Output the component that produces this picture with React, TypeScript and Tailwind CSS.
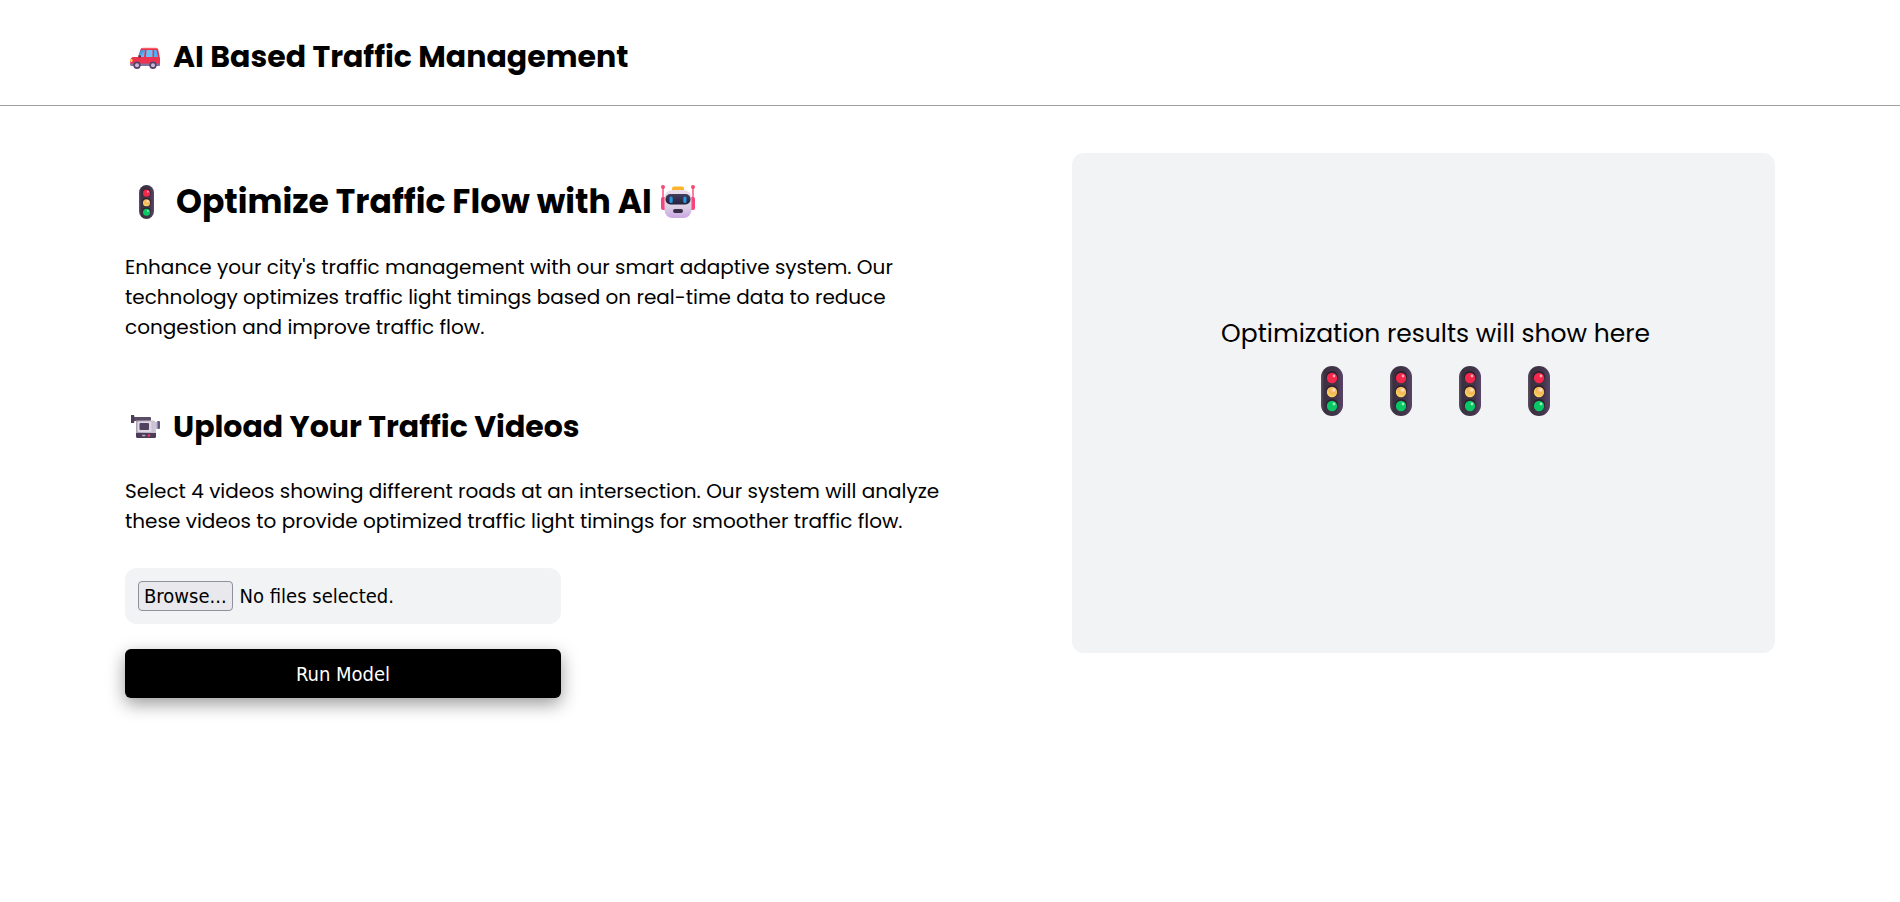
import React, { useRef, useState } from 'react';

function CarIcon() {
  return (
    <svg viewBox="0 0 32 32" className="w-8 h-8 shrink-0" aria-hidden="true">
      <defs>
        <linearGradient id="carGlass" x1="0" y1="0" x2="1" y2="1">
          <stop offset="0" stopColor="#1f7fd6" />
          <stop offset="1" stopColor="#7ccbfb" />
        </linearGradient>
      </defs>
      <path d="M13.500 7h13.700c1 0 1.700.6 2 1.500L30.500 15v9H6l3-8 2.600-7.700c.3-.8 1-1.300 1.900-1.300Z" fill="#e8304f" />
      <path d="M14 6.800h13c.8 0 1.400.3 1.800 1H12.200c.4-.7 1-1 1.800-1Z" fill="#ff6f6f" />
      <path d="M12.500 9h3.500l-1 7H9.300l2-5.800c.2-.7.6-1.200 1.200-1.200Z" fill="url(#carGlass)" />
      <path d="M18 9h5.500v7H17l.5-6.500Z" fill="#6cc0f7" />
      <path d="M25 9h2.500l1.500 7h-4Z" fill="#4fb0f0" />
      <path d="M4.500 16H30c.6 0 1 .5 1 1v6c0 1-.5 1.500-1.500 1.500H3c-1.200 0-1.800-.7-1.800-1.800V20c0-2.300 1.300-4 3.300-4Z" fill="#ee3350" />
      <path d="M1.200 22.500H31v1.300c0 .8-.5 1.200-1.300 1.200H2.500c-.9 0-1.300-.4-1.300-1.200Z" fill="#84749c" />
      <rect x="1.300" y="18" width="2.200" height="3" rx="1" fill="#ffe145" />
      <rect x="9.500" y="14.300" width="2.500" height="2.200" rx=".8" fill="#54334f" />
      <circle cx="8" cy="24.200" r="3.700" fill="#5a4068" />
      <circle cx="8" cy="24.200" r="2" fill="#c8b8d8" />
      <circle cx="24" cy="24.200" r="3.700" fill="#5a4068" />
      <circle cx="24" cy="24.200" r="2" fill="#c8b8d8" />
    </svg>
  );
}

function TrafficLight({ className }: { className: string }) {
  return (
    <svg viewBox="0 0 22 50" className={className} aria-hidden="true">
      <defs>
        <linearGradient id="lightBody" x1="0" y1="0" x2="1" y2="0">
          <stop offset="0" stopColor="#5b5162" />
          <stop offset="0.15" stopColor="#3b303f" />
          <stop offset="0.7" stopColor="#42354a" />
          <stop offset="1" stopColor="#594468" />
        </linearGradient>
        <radialGradient id="lightAmber" cx="0.6" cy="0.3" r="0.8">
          <stop offset="0" stopColor="#ffd3a0" />
          <stop offset="0.4" stopColor="#f3b552" />
          <stop offset="1" stopColor="#ffe070" />
        </radialGradient>
      </defs>
      <rect x="0" y="0" width="22" height="50" rx="11" fill="url(#lightBody)" />
      <circle cx="11" cy="11" r="6" fill="#2c2030" />
      <circle cx="11" cy="25" r="6" fill="#2c2030" />
      <circle cx="11" cy="39" r="6" fill="#2c2030" />
      <circle cx="11" cy="12" r="5.200" fill="#f3284b" />
      <circle cx="11" cy="26" r="5.200" fill="url(#lightAmber)" />
      <circle cx="11" cy="40" r="5.200" fill="#09c765" />
      <circle cx="13" cy="10" r="1.400" fill="#ffa5b5" />
      <circle cx="13" cy="24" r="1.400" fill="#ffe4c8" />
      <circle cx="13" cy="38" r="1.400" fill="#9af0bd" />
    </svg>
  );
}

function RobotIcon() {
  return (
    <svg viewBox="0 0 36 36" className="w-9 h-9 shrink-0" aria-hidden="true">
      <defs>
        <linearGradient id="robotHead" x1="0" y1="0" x2="0" y2="1">
          <stop offset="0" stopColor="#e9dfec" />
          <stop offset="0.6" stopColor="#dccfe4" />
          <stop offset="1" stopColor="#c9a6e2" />
        </linearGradient>
        <linearGradient id="robotFace" x1="0" y1="0" x2="0" y2="1">
          <stop offset="0" stopColor="#433d5c" />
          <stop offset="1" stopColor="#22203c" />
        </linearGradient>
      </defs>
      <path d="M3 3v12M33 3v12" stroke="#ff5c86" strokeWidth="1.600" />
      <circle cx="3" cy="3" r="2" fill="#f24a73" />
      <circle cx="33" cy="3" r="2" fill="#f24a73" />
      <rect x="1" y="13" width="6" height="13" rx="2" fill="#f6457b" />
      <rect x="29" y="13" width="6" height="13" rx="2" fill="#f6457b" />
      <rect x="12" y="2.500" width="12" height="6" rx="2" fill="#fcb42c" />
      <rect x="4.500" y="6" width="27" height="28" rx="8" fill="url(#robotHead)" />
      <rect x="5.500" y="10" width="25" height="10.500" rx="5" fill="url(#robotFace)" />
      <rect x="9.500" y="12.500" width="3.200" height="6.500" rx="1.500" fill="#2497de" />
      <rect x="23.300" y="12.500" width="3.200" height="6.500" rx="1.500" fill="#2497de" />
      <rect x="13" y="25" width="10" height="4" rx="2" fill="#3a2d48" />
    </svg>
  );
}

function CameraIcon() {
  return (
    <svg viewBox="0 0 32 32" className="w-8 h-8 shrink-0" aria-hidden="true">
      <defs>
        <linearGradient id="camBody" x1="0" y1="0" x2="1" y2="0">
          <stop offset="0" stopColor="#a99fb3" />
          <stop offset="1" stopColor="#cfc8d6" />
        </linearGradient>
      </defs>
      <rect x="4" y="7" width="18" height="4" rx="1" fill="#5b4c66" />
      <path d="M2 5h2.500c.5 0 .8.400.8.800v6.400c0 .5-.3.800-.8.800H2Z" fill="#4b3d58" />
      <rect x="28" y="11" width="3" height="8" rx="1" fill="#66577c" />
      <rect x="25" y="12" width="3.500" height="7" fill="#bdb5c9" />
      <path d="M7 10.500h17.500c1.500 0 2.500 1 2.500 2.500v10H7Z" fill="url(#camBody)" />
      <rect x="8.500" y="11.500" width="14" height="10.500" rx="1" fill="#ded8e4" />
      <rect x="10.500" y="13" width="9.500" height="7" rx="1" fill="#51415f" />
      <path d="M7 23h20v3.500c0 .8-.5 1.500-1.500 1.500h-17C7.500 28 7 27.300 7 26.500Z" fill="#4c3c5a" />
      <rect x="13" y="24.800" width="3.500" height="1.400" rx=".6" fill="#b7abc4" />
      <circle cx="20" cy="25.500" r="1.200" fill="#f03a5f" />
    </svg>
  );
}

function App() {
  const fileRef = useRef<HTMLInputElement>(null);
  const [count, setCount] = useState(0);

  return (
    <div className="bg-white text-black font-['Poppins','Inter',sans-serif]">
      <header className="border-b border-[#a0a0a0] px-[125px] pt-9 pb-7">
        <h1 className="flex items-center gap-3 pl-1 h-[41px] text-[30px] font-bold whitespace-nowrap">
          <CarIcon />
          AI Based Traffic Management
        </h1>
      </header>

      <main className="grid grid-cols-[27fr_23fr] items-start gap-[122px] px-[125px] pt-[47px] pb-16">
        <div className="pt-[25px]">
          <section>
            <h2 className="flex items-center gap-2 h-12 text-[33px] font-bold whitespace-nowrap">
              <span className="flex justify-center w-[43px]">
                <TrafficLight className="w-[15px] h-[34px]" />
              </span>
              Optimize Traffic Flow with AI
              <RobotIcon />
            </h2>
            <p className="mt-[26px] text-[20px] leading-[30px]">
              Enhance your city's traffic management with our smart adaptive system. Our technology
              optimizes traffic light timings based on real-time data to reduce congestion and
              improve traffic flow.
            </p>
          </section>

          <section className="mt-[60px]">
            <h2 className="flex items-center gap-3 pl-1 h-12 text-[30px] font-bold whitespace-nowrap">
              <CameraIcon />
              Upload Your Traffic Videos
            </h2>
            <p className="mt-[26px] text-[20px] leading-[30px]">
              Select 4 videos showing different roads at an intersection. Our system will analyze
              these videos to provide optimized traffic light timings for smoother traffic flow.
            </p>

            <form
              className="mt-8 w-[436px] font-['DejaVu_Sans_Condensed','DejaVu_Sans',sans-serif] text-[20px]"
              onSubmit={(e) => e.preventDefault()}
            >
              <div className="flex items-center gap-[7px] h-14 px-[13px] rounded-xl bg-[#f1f3f5]">
                <input
                  ref={fileRef}
                  type="file"
                  multiple
                  accept="video/*"
                  aria-label="Traffic videos"
                  className="hidden"
                  onChange={(e) => setCount(e.target.files?.length ?? 0)}
                />
                <button
                  type="button"
                  onClick={() => fileRef.current?.click()}
                  className="h-[30px] px-[5px] rounded border border-[#8f8f9d] bg-[#e9e9ed] leading-7"
                >
                  Browse...
                </button>
                <span>{count ? `${count} files selected.` : 'No files selected.'}</span>
              </div>
              <button
                type="submit"
                className="mt-[25px] w-full h-[49px] rounded-md bg-black text-white shadow-[0_6px_18px_rgba(0,0,0,0.4)]"
              >
                Run Model
              </button>
            </form>
          </section>
        </div>

        <section className="flex flex-col items-center h-[500px] pt-[161px] pl-6 rounded-xl bg-[#f1f3f5]">
          <p className="text-[25px] leading-10">Optimization results will show here</p>
          <div className="flex gap-[47px] mt-3">
            {[1, 2, 3, 4].map((road) => (
              <TrafficLight key={road} className="w-[22px] h-[50px]" />
            ))}
          </div>
        </section>
      </main>
    </div>
  );
}

export default App;
